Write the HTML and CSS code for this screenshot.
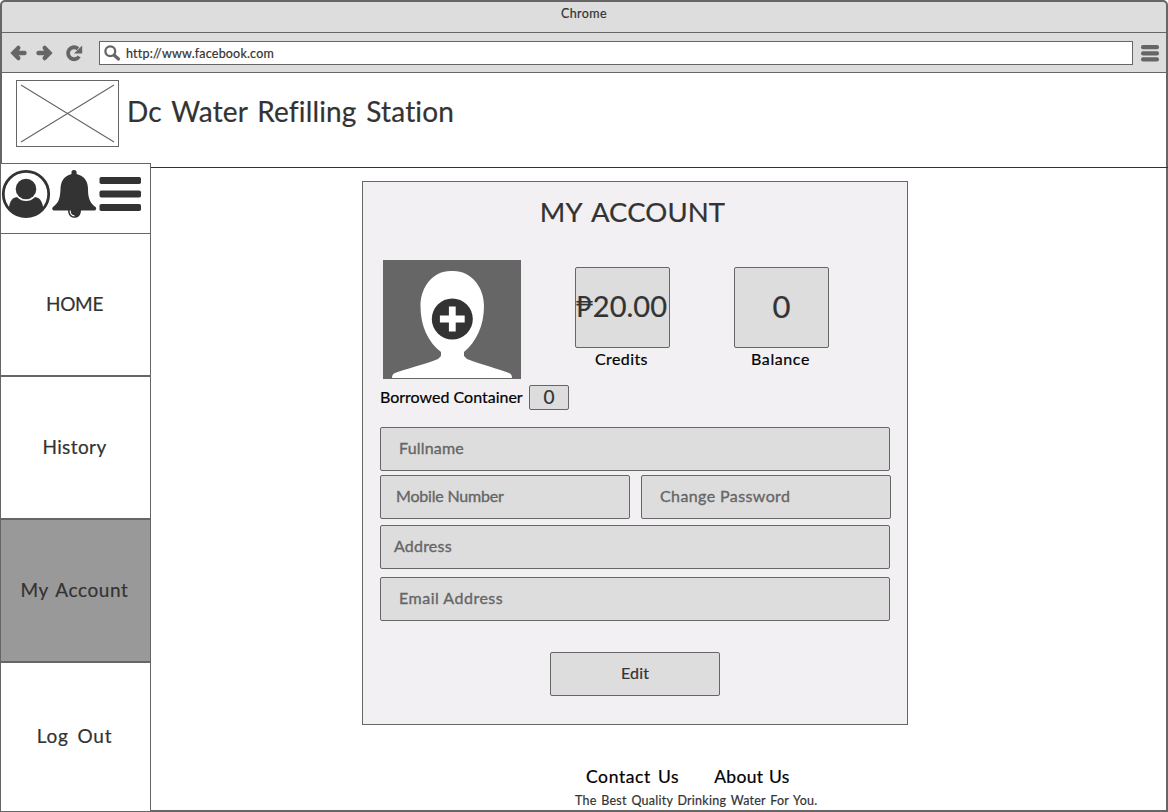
FILE: index.html
```html
<!DOCTYPE html>
<html lang="en">
<head>
<meta charset="utf-8">
<title>Dc Water Refilling Station</title>
<link rel="stylesheet" href="styles.css">
</head>
<body>
<div class="window">
  <div class="titlebar"><span class="window-title">Chrome</span></div>
  <div class="toolbar">
    <svg class="nav-icons" width="76" height="20" viewBox="0 0 76 20">
      <g fill="none" stroke="#666" stroke-width="4.400" stroke-linecap="round">
        <path d="M8.300 4.900L3.400 10L8.300 15.100M4.500 10H14.500"/>
        <path d="M34.700 4.900L39.600 10L34.700 15.100M38.500 10H28.500"/>
        <path d="M68 5.700A6 6 0 1 0 69.100 13.500" stroke-width="3.800" stroke-linecap="butt"/>
      </g>
      <path d="M72.200 2.500V10.500H64Z" fill="#666"/>
    </svg>
    <div class="address-bar">
      <svg width="17" height="17" viewBox="0 0 17 17" fill="none" stroke="#666">
        <circle cx="6.300" cy="6.300" r="4.900" stroke-width="2.300"/>
        <path d="M10.200 10.200L14.500 14" stroke-width="3.200" stroke-linecap="round"/>
      </svg>
      <span class="url">http://www.facebook.com</span>
    </div>
    <svg class="menu-icon" width="18" height="17" viewBox="0 0 18 17" fill="#666">
      <rect width="18" height="4.200" rx="2"/><rect y="6.200" width="18" height="4.200" rx="2"/><rect y="12.300" width="18" height="4.200" rx="2"/>
    </svg>
  </div>
  <header class="site-header">
    <svg class="logo" width="103" height="67" viewBox="0 0 103 67" fill="none" stroke="#666">
      <rect x=".5" y=".5" width="102" height="66"/>
      <path d="M5 5L98 62M98 5L5 62" stroke-width="1.100"/>
    </svg>
    <h1 class="site-name">Dc Water Refilling Station</h1>
  </header>
  <div class="content">
    <nav class="sidebar">
      <div class="sidebar-icons">
        <svg width="142" height="50" viewBox="0 0 142 50">
          <defs><clipPath id="disc"><circle cx="25" cy="25" r="23"/></clipPath></defs>
          <circle cx="25" cy="25" r="22.700" fill="#fff" stroke="#333" stroke-width="2.800"/>
          <g clip-path="url(#disc)">
            <path d="M8 50V38C9 32 11.500 28 17 28H33C38.500 28 41 32 42 38V50Z" fill="#333"/>
            <circle cx="25" cy="20" r="12" fill="#fff"/>
            <circle cx="25" cy="20" r="10.300" fill="#333"/>
          </g>
          <path d="M73 1C75 1 76 2.500 75.600 5C84 7 87 13 87 20C87 31 90 34.500 94.500 38C96 39.500 95 41.500 93 41.500H53.500C51.300 41.500 50.500 39.500 52 38C57 34 59 31 59.500 20C59.800 12.500 62.500 7 70.600 5C70 2.500 71 1 73 1Z" fill="#333"/>
          <path d="M67 41H80C80 46 77.500 48.800 73.500 48.800C69.500 48.800 67 46 67 41Z" fill="#333"/>
          <path d="M69.200 41.500C69.200 44.800 71 46.800 73.500 46.900" fill="none" stroke="#fff" stroke-width="1.100"/>
          <g fill="#333"><rect x="98.500" y="8" width="41.500" height="7" rx="1.800"/><rect x="98.500" y="21.500" width="41.500" height="7" rx="1.800"/><rect x="98.500" y="35" width="41.500" height="7" rx="1.800"/></g>
        </svg>
      </div>
      <a class="nav-item first"><span class="t-home">HOME</span></a>
      <a class="nav-item"><span class="t-history">History</span></a>
      <a class="nav-item active"><span class="t-account">My Account</span></a>
      <a class="nav-item last"><span class="t-logout">Log Out</span></a>
    </nav>
    <main class="main">
      <div class="rule"></div>
      <div class="page">
        <section class="card">
          <h2 class="card-title">MY ACCOUNT</h2>
          <div class="summary">
            <svg class="avatar" width="138" height="119" viewBox="0 0 138 119">
              <rect width="138" height="119" fill="#666"/>
              <path d="M69 11C87 10 101 26 101 46C101 66 93 82 81 92V96L84 99C100 105 116 109 126 113Q129 114 129 118H9Q9 114 12 113C22 109 40 105 55 99L58 96V92C45 82 37.500 66 37.500 46C37.500 26 51 10 69 11Z" fill="#fff"/>
              <circle cx="69.300" cy="59" r="20.500" fill="#333"/>
              <path d="M69.300 50V68M60.300 59H78.300" stroke="#fff" stroke-width="6.800" stroke-linecap="square"/>
            </svg>
            <div class="stat"><div class="stat-box amount"><span class="t-amount">₱20.00</span></div><span class="t-credits">Credits</span></div>
            <div class="stat"><div class="stat-box zero"><span class="t-zero">0</span></div><span class="t-balance">Balance</span></div>
          </div>
          <div class="borrowed"><span class="t-borrowed">Borrowed Container</span><span class="count">0</span></div>
          <div class="form">
            <div class="field fullname"><span class="t-fullname">Fullname</span></div>
            <div class="field-row">
              <div class="field mobile"><span class="t-mobile">Mobile Number</span></div>
              <div class="field password"><span class="t-password">Change Password</span></div>
            </div>
            <div class="field address"><span class="t-address">Address</span></div>
            <div class="field email"><span class="t-email">Email Address</span></div>
          </div>
          <div class="button"><span class="t-edit">Edit</span></div>
        </section>
        <footer class="footer">
          <div class="links"><a class="t-contact">Contact Us</a><a class="t-about">About Us</a></div>
          <div class="tagline">The Best Quality Drinking Water For You.</div>
        </footer>
      </div>
    </main>
  </div>
</div>
</body>
</html>
```
FILE: styles.css
```css
* { box-sizing: border-box; }
body { margin: 0; background: #fff; font-family: Lato, "Open Sans", sans-serif; color: #333; }
svg { display: block; flex: none; }
span, a, h1, h2, .tagline { white-space: nowrap; -webkit-text-stroke: .2px currentColor; }
h1, h2 { margin: 0; font-weight: 400; }

.window { width: 1168px; height: 812px; display: flex; flex-direction: column; overflow: hidden; }
.titlebar { height: 33px; border: 2px solid #666; border-bottom: 1px solid #666; border-radius: 5px 5px 0 0; background: #ddd; text-align: center; padding-top: 4px; font-size: 12.5px; line-height: 16px; }
.window-title { letter-spacing: .4px; }
.toolbar { height: 40px; border: 2px solid #666; border-width: 0 2px 1px; background: #ddd; display: flex; align-items: flex-start; padding: 8px 7px 0 8px; }
.nav-icons { margin-top: 2px; }
.address-bar { margin-left: 13px; width: 1034px; height: 24px; border: 1px solid #666; background: #fff; display: flex; padding: 3px 0 0 4px; gap: 5px; font-size: 12.5px; line-height: 18px; }
.url { letter-spacing: .2px; }
.menu-icon { margin: 4px 0 0 8px; }

.site-header { height: 90px; border: 2px solid #666; border-width: 0 2px; display: flex; padding: 7px 0 0 14px; }
.logo { margin-right: 8px; }
.site-name { font-size: 28px; line-height: 34px; margin-top: 14px; letter-spacing: .15px; word-spacing: 2.5px; }

.content { height: 649px; display: flex; }
.sidebar { width: 151px; border: 1px solid #666; display: flex; flex-direction: column; }
.sidebar-icons { height: 70px; padding: 5px 0 0; border-bottom: 1px solid #666; }
.nav-item { height: 143px; border: 0 solid #666; border-width: 1px 0; display: flex; justify-content: center; align-items: center; font-size: 19px; padding: 0 2px 2px 0; }
.nav-item.first { height: 142px; border-top: 0; }
.nav-item.active { background: #999; }
.nav-item.last { height: 149px; border-bottom: 0; padding-bottom: 4px; }
.t-home { letter-spacing: -.3px; }
.t-history { letter-spacing: .4px; }
.t-account { letter-spacing: .6px; word-spacing: 2px; }
.t-logout { letter-spacing: .8px; word-spacing: 3px; }

.main { flex: 1; border: 2px solid #666; border-width: 0 2px 2px 0; padding-top: 4px; display: flex; flex-direction: column; }
.rule { height: 1px; margin-right: -2px; background: #333; }
.page { flex: 1; padding: 13px 0 0 211px; }
.card { width: 546px; height: 544px; border: 1px solid #666; background: #f2f0f2; }
.card-title { margin-top: 13px; font-size: 27.500px; line-height: 34px; letter-spacing: .1px; word-spacing: 3px; text-align: center; padding-right: 5px; }
.summary { display: flex; margin: 31px 0 0 20px; height: 119px; }
.avatar { margin-right: 54px; }
.stat { width: 95px; margin: 7px 64px 0 0; display: flex; flex-direction: column; align-items: center; color: #000; font-size: 16px; line-height: 22px; padding-right: 2px; }
.stat-box { width: 95px; height: 81px; flex: none; align-self: flex-start; border: 1px solid #666; border-radius: 2px; background: #ddd; color: #333; display: flex; align-items: center; justify-content: center; font-size: 29px; padding: 0 2px 3px 0; }
.stat-box.zero { font-size: 31px; padding: 0 0 4px; }
.t-credits { letter-spacing: .4px; }
.t-balance { letter-spacing: .6px; }
.borrowed { display: flex; align-items: center; margin: 6px 0 0 17px; height: 25px; color: #000; font-size: 16px; }
.t-borrowed { width: 149px; padding-bottom: 3px; }
.count { width: 40px; height: 25px; border: 1px solid #666; border-radius: 2px; background: #ddd; color: #333; font-size: 19px; line-height: 22px; text-align: center; }
.form { margin: 17px 0 0 17px; }
.field { width: 510px; height: 44px; border: 1px solid #666; border-radius: 2px; background: #ddd; color: #666; font-size: 16px; line-height: 40px; padding-left: 18px; }
.field span { -webkit-text-stroke-width: .35px; }
.field-row { display: flex; gap: 11px; margin: 4px 0 6px; }
.field-row .field { width: 250px; }
.field.mobile { padding-left: 15px; }
.field.address { padding-left: 13px; margin-bottom: 8px; }
.t-fullname { letter-spacing: .2px; }
.t-mobile { letter-spacing: -.2px; }
.t-password { letter-spacing: .4px; }
.t-address { letter-spacing: .2px; }
.t-email { letter-spacing: .5px; }
.t-edit { letter-spacing: .2px; }
.button { margin: 31px 0 0 187px; width: 170px; height: 44px; border: 1px solid #666; border-radius: 2px; background: #ddd; font-size: 16px; line-height: 39px; text-align: center; }
.footer { color: #000; margin-top: 41px; }
.links { display: flex; font-size: 17.500px; line-height: 22px; gap: 35px; padding-left: 224px; }
.t-contact { letter-spacing: .6px; word-spacing: 2px; }
.t-about { letter-spacing: .3px; word-spacing: 1px; }
.tagline { color: #333; font-size: 12.500px; line-height: 16px; padding: 5px 0 0 213px; letter-spacing: .25px; word-spacing: 1.200px; }
```
